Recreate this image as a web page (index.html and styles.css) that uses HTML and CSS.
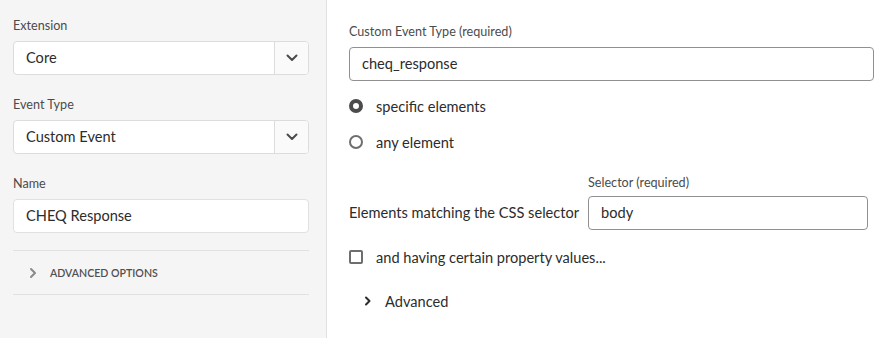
FILE: index.html
```html
<!DOCTYPE html>
<html>
<head>
<meta charset="utf-8">
<link rel="stylesheet" href="styles.css">
</head>
<body>
<div class="page">
  <aside class="sidebar">
    <div class="field">
      <div class="label">Extension</div>
      <div class="select">
        <span class="select-value">Core</span>
        <span class="select-btn"><svg width="12" height="8" viewBox="0 0 12 8"><path d="M1.5 1.5 L6 6 L10.5 1.5" fill="none" stroke="#4b4b4b" stroke-width="2" stroke-linecap="round" stroke-linejoin="round"/></svg></span>
      </div>
    </div>
    <div class="field">
      <div class="label">Event Type</div>
      <div class="select">
        <span class="select-value">Custom Event</span>
        <span class="select-btn"><svg width="12" height="8" viewBox="0 0 12 8"><path d="M1.5 1.5 L6 6 L10.5 1.5" fill="none" stroke="#4b4b4b" stroke-width="2" stroke-linecap="round" stroke-linejoin="round"/></svg></span>
      </div>
    </div>
    <div class="field field-last">
      <div class="label">Name</div>
      <div class="text-input side-input">CHEQ Response</div>
    </div>
    <div class="accordion">
      <svg width="8" height="12" viewBox="0 0 8 12"><path d="M2 2 L6 6 L2 10" fill="none" stroke="#8a8a8a" stroke-width="2" stroke-linecap="round" stroke-linejoin="round"/></svg>
      <span class="accordion-text">ADVANCED OPTIONS</span>
    </div>
  </aside>
  <main class="main">
    <div class="label">Custom Event Type (required)</div>
    <div class="text-input main-input">cheq_response</div>
    <div class="radios">
      <div class="radio-row"><span class="radio checked"></span><span>specific elements</span></div>
      <div class="radio-row"><span class="radio"></span><span>any element</span></div>
    </div>
    <div class="selector-row">
      <span class="selector-text">Elements matching the CSS selector</span>
      <div class="selector-field">
        <div class="label small-gap">Selector (required)</div>
        <div class="text-input main-input">body</div>
      </div>
    </div>
    <div class="check-row"><span class="checkbox"></span><span>and having certain property values...</span></div>
    <div class="adv-row">
      <svg width="8" height="12" viewBox="0 0 8 12"><path d="M2 2.5 L5.5 6 L2 9.5" fill="none" stroke="#2c2c2c" stroke-width="2" stroke-linecap="round" stroke-linejoin="round"/></svg>
      <span>Advanced</span>
    </div>
  </main>
</div>
</body>
</html>
```

FILE: styles.css
```css
* { box-sizing: border-box; }
html, body { margin: 0; padding: 0; }
body {
  font-family: Lato, "Open Sans", sans-serif;
  color: #2c2c2c;
  background: #fff;
}
.page {
  display: flex;
  width: 876px;
  height: 338px;
  overflow: hidden;
}
.sidebar {
  width: 327px;
  flex: none;
  background: #f5f5f5;
  border-right: 1px solid #e1e1e1;
  padding: 18px 17px 0 13px;
}
.field { margin-bottom: 22px; }
.field-last { margin-bottom: 17px; }
.label {
  font-size: 12.6px;
  line-height: 16px;
  color: #4b4b4b;
  margin-bottom: 7px;
}
.label.small-gap { margin-bottom: 5px; }
.select {
  display: flex;
  height: 34px;
  background: #fff;
  border: 1px solid #dcdcdc;
  border-radius: 4px;
  overflow: hidden;
}
.select-value {
  flex: 1;
  font-size: 14.6px;
  line-height: 32px;
  padding-left: 12px;
}
.select-btn {
  width: 34px;
  flex: none;
  border-left: 1px solid #dcdcdc;
  background: #fafafa;
  display: flex;
  align-items: center;
  justify-content: center;
}
.text-input {
  height: 34px;
  background: #fff;
  border-radius: 4px;
  font-size: 14.6px;
  line-height: 32px;
  padding-left: 12px;
}
.side-input { border: 1px solid #e1e1e1; }
.main-input { border: 1px solid #909090; }
.accordion {
  border-top: 1px solid #e1e1e1;
  border-bottom: 1px solid #e1e1e1;
  height: 45px;
  display: flex;
  align-items: center;
  padding-left: 16px;
  gap: 13px;
}
.accordion-text {
  font-size: 10.6px;
  font-weight: 600;
  color: #505050;
}
.main {
  flex: 1;
  padding: 24px 2px 0 22px;
  font-size: 14.6px;
}
.radios { margin-top: 7px; }
.radio-row {
  display: flex;
  align-items: center;
  height: 36px;
  gap: 13px;
}
.radio {
  width: 14px;
  height: 14px;
  border-radius: 50%;
  border: 2px solid #6e6e6e;
  background: #fff;
  flex: none;
}
.radio.checked { border: 4.5px solid #4b4b4b; }
.selector-row {
  display: flex;
  align-items: flex-end;
  margin-top: 15px;
  gap: 9px;
}
.selector-text {
  line-height: 34px;
  white-space: nowrap;
}
.selector-field { width: 280px; }
.check-row {
  display: flex;
  align-items: center;
  height: 34px;
  margin-top: 10px;
  gap: 13px;
}
.checkbox {
  width: 14px;
  height: 14px;
  border: 2px solid #6e6e6e;
  border-radius: 2px;
  background: #fff;
  flex: none;
}
.adv-row {
  display: flex;
  align-items: center;
  height: 34px;
  margin-top: 10px;
  padding-left: 15px;
  gap: 13px;
}
```
